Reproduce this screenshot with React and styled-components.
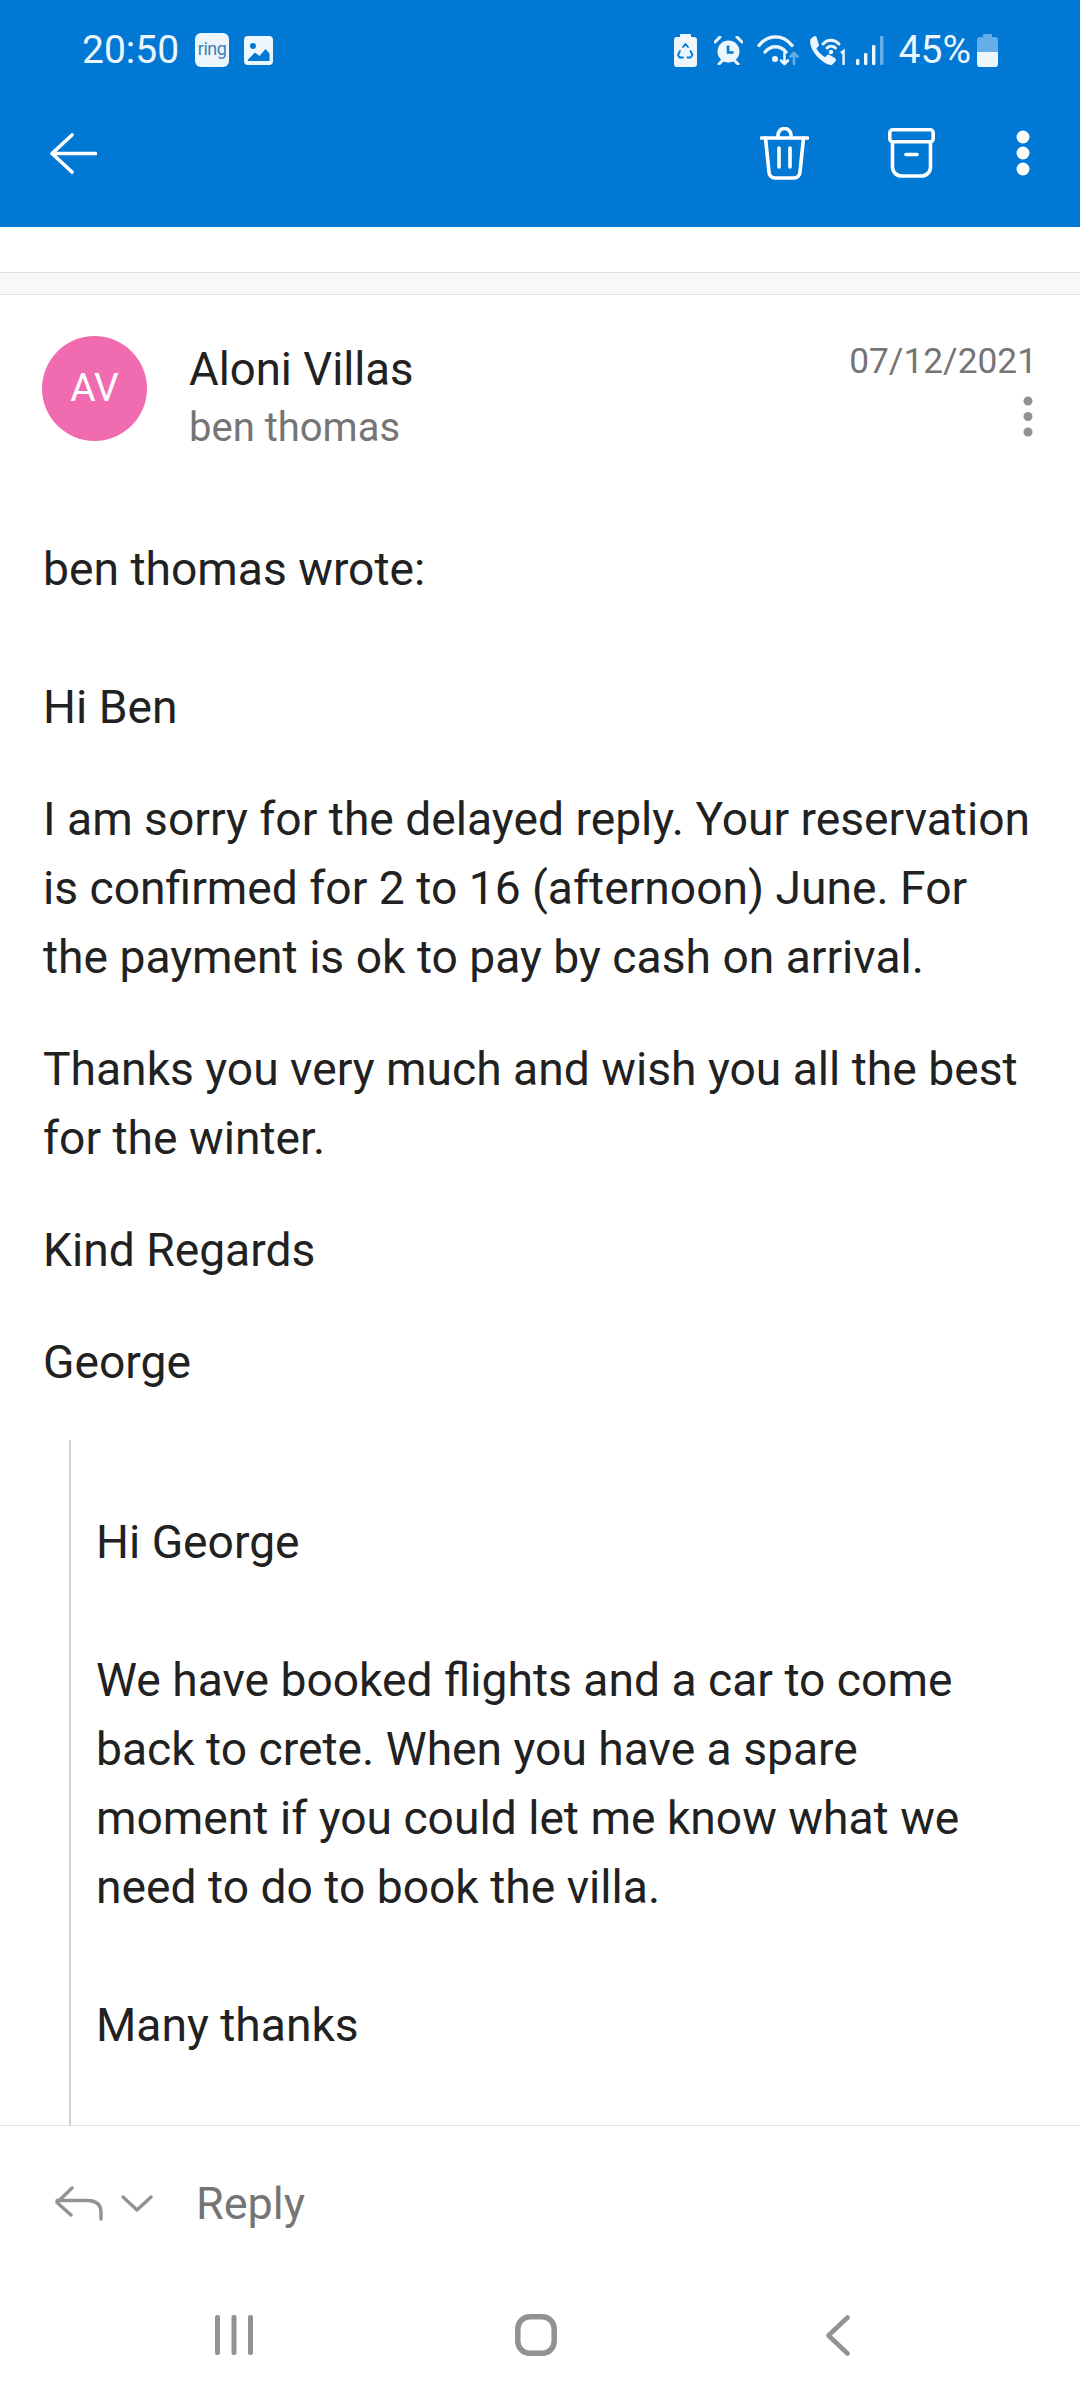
import styled, { createGlobalStyle } from "styled-components";

//Styling variables
const BLUE = "#0078d4";
const STATUS_WHITE = "#edf6fd";
const STATUS_DIM = "#66aeea";
const TEXT = "#212121";
const MUTED = "#757575";
const ICON_GREY = "#929292";
const LINE = "#e1e1e1";

const GlobalStyle = createGlobalStyle`
  html, body {
    margin: 0;
    padding: 0;
    background: #ffffff;
  }
  body {
    font-family: Roboto, "Liberation Sans", sans-serif;
  }
`;

const BackArrow = () => (
  <svg width="47" height="41" viewBox="0 0 47 41" fill="none" stroke="#fff" strokeWidth="3.6" strokeLinecap="round" strokeLinejoin="round">
    <path d="M45.5 20.5H2M22 2L2 20.5 22 39" />
  </svg>
);

const TrashIcon = () => (
  <svg width="49" height="53" viewBox="0 0 49 53" fill="none" stroke="#fff" strokeWidth="3.6" strokeLinecap="round" strokeLinejoin="round">
    <path d="M1.5 11H47.5" />
    <path d="M18 10V8a6.500 6.500 0 0 1 13 0v2" />
    <path d="M5.500 11l3.500 34a6 6 0 0 0 6 6h19a6 6 0 0 0 6-6l3.500-34" />
    <path d="M19 21V40M30 21V40" />
  </svg>
);

const ArchiveIcon = () => (
  <svg width="47" height="50" viewBox="0 0 47 50" fill="none" stroke="#fff" strokeWidth="3.6" strokeLinecap="round" strokeLinejoin="round">
    <rect x="1.800" y="1.800" width="43.400" height="12" rx="3" />
    <path d="M4.500 14V39a9 9 0 0 0 9 9h20a9 9 0 0 0 9-9V14" />
    <path d="M18 26.500H29" />
  </svg>
);

const MoreIcon = ({ color, size = 14, gap = 16 }) => (
  <svg width={size} height={gap * 2 + size} viewBox={`0 0 ${size} ${gap * 2 + size}`} fill={color}>
    <circle cx={size / 2} cy={size / 2} r={size / 2 - 0.5} />
    <circle cx={size / 2} cy={size / 2 + gap} r={size / 2 - 0.5} />
    <circle cx={size / 2} cy={size / 2 + gap * 2} r={size / 2 - 0.5} />
  </svg>
);

const PictureIcon = () => (
  <svg width="29" height="29" viewBox="0 0 29 29">
    <rect width="29" height="29" rx="4" fill={STATUS_WHITE} />
    <circle cx="9" cy="10" r="3" fill={BLUE} />
    <path d="M4 23.500L11 16.500l4.500 3.500 6-7 4 4.500V25H4z" fill={BLUE} />
    <path d="M3 26h23" stroke={STATUS_WHITE} strokeWidth="2" />
  </svg>
);

const RecycleBattery = () => (
  <svg width="23" height="33" viewBox="0 0 23 33">
    <path d="M7 0h9a1 1 0 0 1 1 1v2h3a3 3 0 0 1 3 3v24a3 3 0 0 1-3 3H3a3 3 0 0 1-3-3V6a3 3 0 0 1 3-3h3V1a1 1 0 0 1 1-1z" fill={STATUS_WHITE} />
    <path d="M9 13l2.500-3 2.500 3M16.500 17l2 4-2 2.500h-3M9 23.500H5.500l-1.500-2.500 2-4" fill="none" stroke={BLUE} strokeWidth="1.800" strokeLinecap="round" strokeLinejoin="round" />
  </svg>
);

const AlarmIcon = () => (
  <svg width="29" height="29" viewBox="0 0 29 29">
    <circle cx="14.500" cy="15.500" r="11" fill={STATUS_WHITE} />
    <path d="M1 6l5-5M28 6l-5-5" stroke={STATUS_WHITE} strokeWidth="3" strokeLinecap="round" />
    <path d="M5 28l3-3M24 28l-3-3" stroke={STATUS_WHITE} strokeWidth="3" strokeLinecap="round" />
    <path d="M14 9.500v7h5.500" fill="none" stroke={BLUE} strokeWidth="2.600" />
  </svg>
);

const WifiIcon = () => (
  <svg width="42" height="31" viewBox="0 0 42 31" fill="none" strokeLinecap="round">
    <path d="M2 10.500C11-1 26-1 35 10.500" stroke={STATUS_WHITE} strokeWidth="3.400" />
    <path d="M8 17C14 10 23 10 29 17" stroke={STATUS_WHITE} strokeWidth="3.400" />
    <circle cx="18" cy="24" r="3" fill={STATUS_WHITE} />
    <path d="M27.500 18V29M24 25.500l3.500 3.500 3.500-3.500" stroke={STATUS_WHITE} strokeWidth="2.600" strokeLinejoin="round" />
    <path d="M37 29V18M33.500 21.500L37 18l3.500 3.500" stroke={STATUS_DIM} strokeWidth="2.600" strokeLinejoin="round" />
  </svg>
);

const CallIcon = () => (
  <svg width="36" height="29" viewBox="0 0 36 29">
    <path d="M4 1L1 3.500C0 9 3 15 8 20.500c4 4 9 7.500 13.500 8l3.500-3.500c.500-1 .500-2-.500-2.500l-5-3c-1-.500-2-.200-2.500.500l-1.500 2c-4-2-8-6-10-10l2-1.500c1-.500 1-1.500.500-2.500L6 1.500C5.500.700 4.700.600 4 1z" fill={STATUS_WHITE} stroke={STATUS_WHITE} strokeWidth="1.200" />
    <path d="M13 8c4.500-5 11-5 16 0M17 12c2.500-2.500 6-2.500 8.500 0" fill="none" stroke={STATUS_WHITE} strokeWidth="3" strokeLinecap="round" />
    <circle cx="21" cy="16" r="2.200" fill={STATUS_WHITE} />
    <path d="M31 17l2.600-2v14" fill="none" stroke={STATUS_WHITE} strokeWidth="2.400" />
  </svg>
);

const SignalIcon = () => (
  <svg width="28" height="29" viewBox="0 0 28 29" fill={STATUS_WHITE}>
    <rect x="0" y="23" width="3.400" height="6" rx="1" />
    <rect x="8" y="17" width="3.400" height="12" rx="1" />
    <rect x="16" y="9" width="3.400" height="20" rx="1" />
    <rect x="24" y="0" width="3.400" height="29" rx="1" fill={STATUS_DIM} />
  </svg>
);

const BatteryIcon = () => (
  <svg width="21" height="33" viewBox="0 0 21 33">
    <path d="M7 0h7a1 1 0 0 1 1 1v2h3a3 3 0 0 1 3 3v12H0V6a3 3 0 0 1 3-3h3V1a1 1 0 0 1 1-1z" fill={STATUS_DIM} />
    <path d="M0 18h21v12a3 3 0 0 1-3 3H3a3 3 0 0 1-3-3z" fill={STATUS_WHITE} />
  </svg>
);

const ReplyIcon = () => (
  <svg width="48" height="35" viewBox="0 0 48 35" fill="none" stroke={ICON_GREY} strokeWidth="3.400" strokeLinecap="round" strokeLinejoin="round">
    <path d="M17 2L2 16.500 16 29" />
    <path d="M2 14.500h30c9 0 14 4 14 12v6.500" />
  </svg>
);

const ChevronIcon = () => (
  <svg width="32" height="17" viewBox="0 0 32 17" fill="none" stroke={ICON_GREY} strokeWidth="3.400" strokeLinecap="round" strokeLinejoin="round">
    <path d="M2 2l14 13L30 2" />
  </svg>
);

const RecentsIcon = () => (
  <svg width="38" height="40" viewBox="0 0 38 40" fill={ICON_GREY}>
    <rect x="0" y="0" width="5" height="40" rx="2" />
    <rect x="16.500" y="0" width="5" height="40" rx="2" />
    <rect x="33" y="0" width="5" height="40" rx="2" />
  </svg>
);

const HomeIcon = () => (
  <svg width="42" height="42" viewBox="0 0 42 42" fill="none" stroke={ICON_GREY} strokeWidth="5.500">
    <rect x="2.800" y="2.800" width="36.400" height="36.400" rx="12" />
  </svg>
);

const NavBackIcon = () => (
  <svg width="24" height="41" viewBox="0 0 24 41" fill="none" stroke={ICON_GREY} strokeWidth="4.600" strokeLinecap="round" strokeLinejoin="round">
    <path d="M21.500 2.500L2.500 20.500l19 18" />
  </svg>
);

const App = () => {
  return (
    <>
      <GlobalStyle />
      <Screen>
        <Header>
          <StatusBar>
            <StatusGroup>
              <StatusText>20:50</StatusText>
              <StatusSlot $left={16}><RingBadge>ring</RingBadge></StatusSlot>
              <StatusSlot $left={15}><PictureIcon /></StatusSlot>
            </StatusGroup>
            <StatusGroup>
              <RecycleBattery />
              <StatusSlot $left={17}><AlarmIcon /></StatusSlot>
              <StatusSlot $left={14}><WifiIcon /></StatusSlot>
              <StatusSlot $left={11}><CallIcon /></StatusSlot>
              <StatusSlot $left={10}><SignalIcon /></StatusSlot>
              <StatusSlot $left={15}><StatusText>45%</StatusText></StatusSlot>
              <StatusSlot $left={6}><BatteryIcon /></StatusSlot>
            </StatusGroup>
          </StatusBar>
          <Toolbar>
            <BackArrow />
            <ToolbarActions>
              <TrashIcon />
              <ArchiveSlot><ArchiveIcon /></ArchiveSlot>
              <MoreIcon color="#ffffff" />
            </ToolbarActions>
          </Toolbar>
        </Header>

        <TopGap />
        <Band />

        <Content>
          <SenderRow>
            <Avatar>AV</Avatar>
            <SenderInfo>
              <SenderName>Aloni Villas</SenderName>
              <Recipient>ben thomas</Recipient>
            </SenderInfo>
            <MetaColumn>
              <DateText>07/12/2021</DateText>
              <MoreSlot>
                <MoreIcon color={ICON_GREY} size={10} gap={15.500} />
              </MoreSlot>
            </MetaColumn>
          </SenderRow>

          <Body>
            <Paragraph $blankAfter>ben thomas wrote:</Paragraph>
            <Paragraph>Hi Ben</Paragraph>
            <Paragraph>
              I am sorry for the delayed reply. Your reservation is confirmed for 2 to 16 (afternoon) June. For the payment is ok to pay by cash on arrival.
            </Paragraph>
            <Paragraph>Thanks you very much and wish you all the best for the winter.</Paragraph>
            <Paragraph>Kind Regards</Paragraph>
            <Paragraph>George</Paragraph>
            <Quote>
              <Paragraph $blankAfter>Hi George</Paragraph>
              <Paragraph $blankAfter>
                We have booked flights and a car to come back to crete. When you have a spare moment if you could let me know what we need to do to book the villa.
              </Paragraph>
              <Paragraph $blankAfter>Many thanks</Paragraph>
            </Quote>
          </Body>
        </Content>

        <ReplyBar>
          <ReplyIcon />
          <ChevronSlot>
            <ChevronIcon />
          </ChevronSlot>
          <ReplyLabel>Reply</ReplyLabel>
        </ReplyBar>

        <NavBar>
          <NavSlot><RecentsIcon /></NavSlot>
          <NavSlot><HomeIcon /></NavSlot>
          <NavSlot><NavBackIcon /></NavSlot>
        </NavBar>
      </Screen>
    </>
  );
};

export default App;

const Screen = styled.div`
  width: 1080px;
  height: 2400px;
  display: flex;
  flex-direction: column;
  overflow: hidden;
  background: #ffffff;
`;

const Header = styled.header`
  background: ${BLUE};
  height: 227px;
  flex-shrink: 0;
`;

const StatusBar = styled.div`
  height: 100px;
  padding: 0 82px 0 82px;
  display: flex;
  align-items: center;
  justify-content: space-between;
`;

const StatusGroup = styled.div`
  display: flex;
  align-items: center;
`;

const StatusSlot = styled.div`
  display: flex;
  margin-left: ${(props) => props.$left}px;
`;

const StatusText = styled.span`
  font-size: 39px;
  line-height: 39px;
  color: ${STATUS_WHITE};
`;

const RingBadge = styled.span`
  width: 34px;
  height: 34px;
  border-radius: 6px;
  background: ${STATUS_WHITE};
  color: #3f7fb5;
  font-size: 18px;
  letter-spacing: -0.5px;
  line-height: 31px;
  text-align: center;
`;

const Toolbar = styled.div`
  height: 106px;
  padding: 0 50px;
  display: flex;
  align-items: center;
  justify-content: space-between;
`;

const ToolbarActions = styled.div`
  display: flex;
  align-items: center;
  gap: 80px;
`;

const ArchiveSlot = styled.div`
  display: flex;
  margin: 0 1px 0 -1px;
`;

const TopGap = styled.div`
  height: 45px;
  flex-shrink: 0;
`;

const Band = styled.div`
  height: 21px;
  flex-shrink: 0;
  background: #f8f8f8;
  border-top: 1.500px solid ${LINE};
  border-bottom: 1.500px solid ${LINE};
  box-sizing: content-box;
`;

const Content = styled.main`
  flex: 1;
  min-height: 0;
  overflow: hidden;
`;

const SenderRow = styled.div`
  display: flex;
  padding: 41px 43px 0 42px;
`;

const Avatar = styled.div`
  width: 105px;
  height: 105px;
  border-radius: 50%;
  background: #f06bb0;
  color: #ffffff;
  font-size: 39px;
  line-height: 105px;
  text-align: center;
  flex-shrink: 0;
`;

const SenderInfo = styled.div`
  flex: 1;
  margin-left: 42px;
  display: flex;
  flex-direction: column;
`;

const SenderName = styled.div`
  font-size: 45.500px;
  line-height: 68px;
  color: ${TEXT};
`;

const Recipient = styled.div`
  font-size: 40px;
  line-height: 48px;
  color: ${MUTED};
`;

const MetaColumn = styled.div`
  display: flex;
  flex-direction: column;
  align-items: flex-end;
  gap: 9px;
`;

const MoreSlot = styled.div`
  display: flex;
  margin-right: 4px;
`;

const DateText = styled.div`
  font-size: 35.300px;
  line-height: 51px;
  color: ${MUTED};
`;

const Body = styled.div`
  padding: 83px 44px 0 43px;
`;

const Paragraph = styled.p`
  margin: 0 0 ${(props) => (props.$blankAfter ? "69px" : "43px")};
  font-size: 46.200px;
  line-height: 69px;
  color: ${TEXT};
`;

const Quote = styled.blockquote`
  margin: 0 0 0 26px;
  padding: 68px 0 200px 25px;
  border-left: 2px solid #cfcfcf;
`;

const ReplyBar = styled.div`
  height: 154px;
  flex-shrink: 0;
  padding-left: 55px;
  display: flex;
  align-items: center;
  border-top: 1.500px solid ${LINE};
`;

const ChevronSlot = styled.div`
  margin-left: 18px;
  display: flex;
`;

const ReplyLabel = styled.span`
  margin-left: 43px;
  font-size: 45px;
  color: ${MUTED};
`;

const NavBar = styled.nav`
  height: 120px;
  flex-shrink: 0;
  box-sizing: border-box;
  padding: 0 8px 10px 0;
  display: flex;
  align-items: center;
  justify-content: center;
`;

const NavSlot = styled.div`
  width: 302px;
  display: flex;
  justify-content: center;
`;
